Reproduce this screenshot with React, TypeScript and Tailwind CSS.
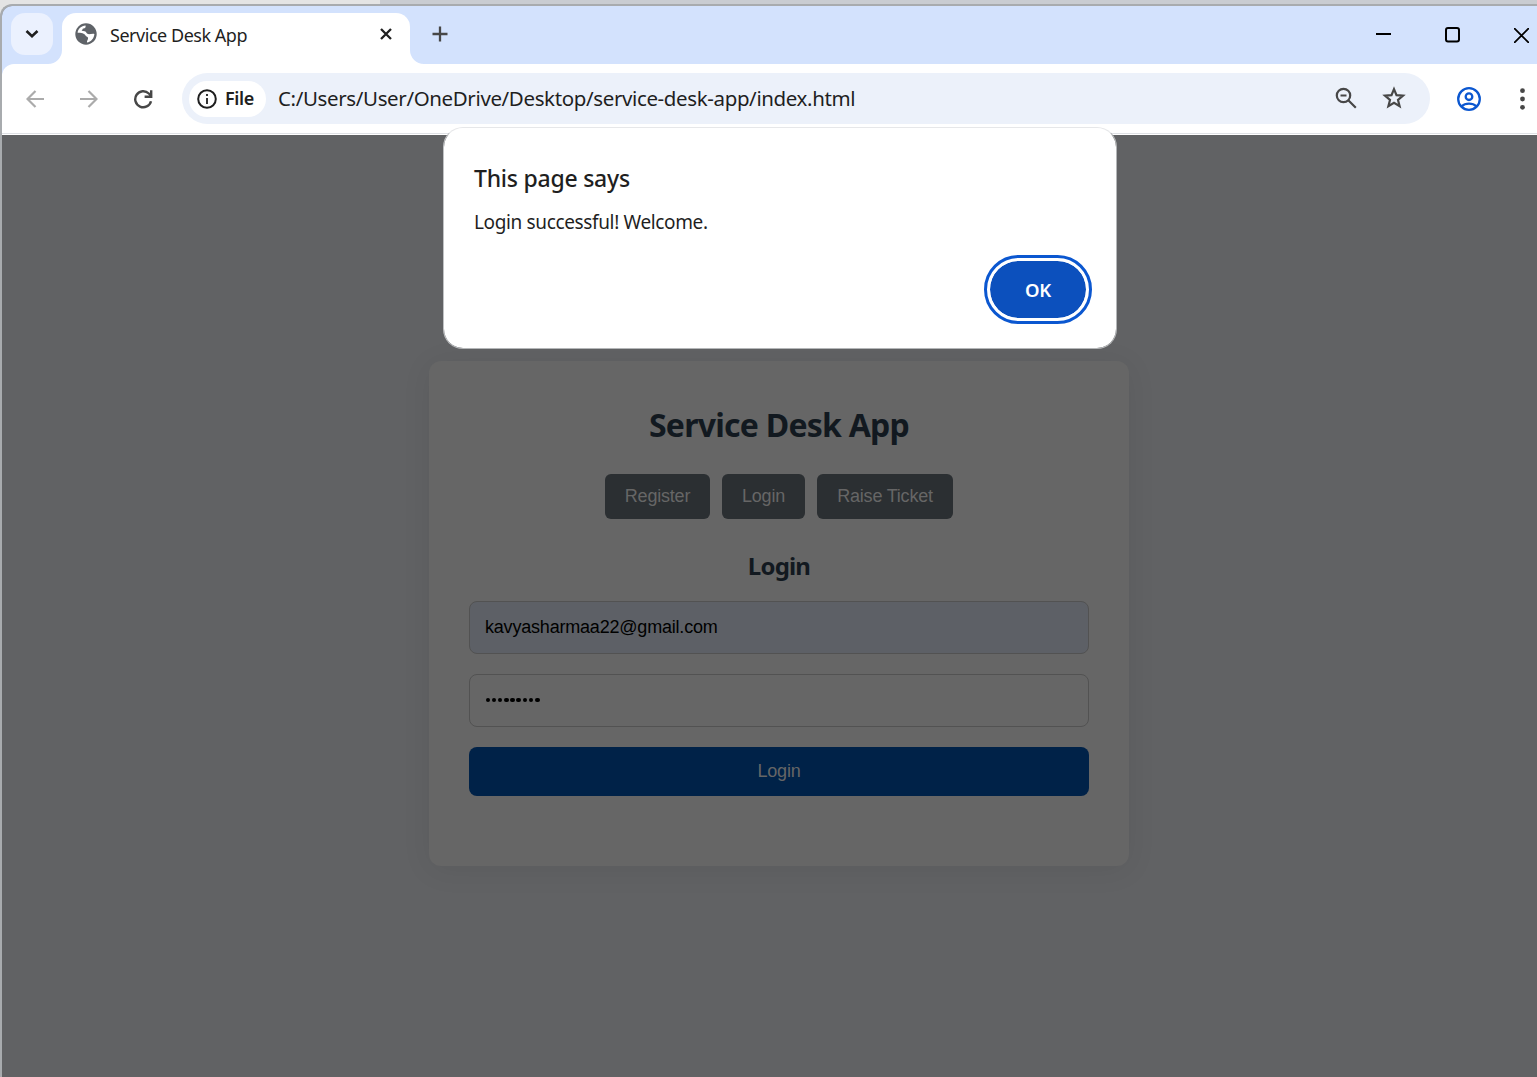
import React from 'react';

const ui = "font-['Noto_Sans','Open_Sans',sans-serif]";

function GlobeIcon() {
  return (
    <svg width="22" height="22" viewBox="0 0 22 22" className="shrink-0">
      <circle cx="11" cy="11" r="10.7" fill="#5f6368" />
      <path d="M2.600 9.800C3 5.800 6.200 2.900 10.600 2.500c.3 1.900-.5 2.800-2.200 3-1.200.2-.7 1.700-1.900 2.300 1 .4 2.100.2 3.200.4 1.900.4 1.600 2.600 3.300 2.900 2 .3 4-.6 6.400-.2-.3 4.200-3.300 7.900-7.400 8.500-.3-1.700.9-2.500 1.100-4 .1-1.700-2-1.200-2.600-2.800C9.700 10.200 6 10 2.600 9.800z" fill="#fff" />
    </svg>
  );
}

function TabStrip() {
  return (
    <div className="flex h-[58px] bg-[#d3e2fd]">
      <div className="w-[60px] shrink-0 pt-[7px] pl-[9px]">
        <button className="flex h-[42px] w-[42px] items-center justify-center rounded-[14px] bg-[#ebf1fe]">
          <svg width="14" height="10" viewBox="0 0 14 10" fill="none" stroke="#1f1f1f" strokeWidth="2.6"><path d="M1.500 2l5.500 5.200L12.500 2" /></svg>
        </button>
      </div>
      <div className="relative mt-[7px] flex h-[51px] w-[348px] shrink-0 items-start rounded-t-[14px] bg-white">
        <svg className="absolute bottom-0 -left-[14px]" width="14" height="14"><path d="M14 0v14H0A14 14 0 0 0 14 0z" fill="#fff" /></svg>
        <svg className="absolute -right-[14px] bottom-0" width="14" height="14"><path d="M0 0v14h14A14 14 0 0 1 0 0z" fill="#fff" /></svg>
        <div className="mt-[10px] ml-[13px]"><GlobeIcon /></div>
        <span className="mt-[10px] ml-[13px] w-[260px] text-[18px] leading-6 tracking-[-0.47px] whitespace-nowrap text-[#1f1f1f]">Service Desk App</span>
        <svg className="mt-[15px] ml-[10px] shrink-0" width="12" height="12" viewBox="0 0 12 12" stroke="#1f1f1f" strokeWidth="2.300"><path d="M1 1l10 10M11 1L1 11" /></svg>
      </div>
      <svg className="mt-[20px] ml-[22px] shrink-0" width="16" height="16" viewBox="0 0 16 16" stroke="#474747" strokeWidth="2.300"><path d="M8 .5v15M.5 8h15" /></svg>
      <svg className="mt-[27px] ml-auto shrink-0" width="15" height="2"><path d="M0 1h15" stroke="#000" strokeWidth="2" /></svg>
      <svg className="mt-[21px] ml-[54px] shrink-0" width="15" height="16" viewBox="0 0 15 16" fill="none"><rect x="1" y="1" width="13" height="13.500" rx="2" stroke="#000" strokeWidth="2" /></svg>
      <svg className="mt-[22px] mr-[8px] ml-[54px] shrink-0" width="15" height="15" viewBox="0 0 15 15" stroke="#000" strokeWidth="1.800"><path d="M0 0l15 15M15 0L0 15" /></svg>
    </div>
  );
}

function Toolbar() {
  return (
    <div className="bg-[#d3e2fd]">
      <div className="flex h-[71px] items-center rounded-tl-[12px] border-b border-white bg-white pb-px pl-[24px] shadow-[inset_0_-1px_0_#dfe1e5]">
        <svg width="18" height="18" viewBox="0 0 18 18" fill="none" stroke="#ababab" strokeWidth="2.200"><path d="M9.500 1L1.500 9l8 8M1.500 9H18" /></svg>
        <svg className="ml-[36px]" width="18" height="18" viewBox="0 0 18 18" fill="none" stroke="#ababab" strokeWidth="2.200"><path d="M8.500 1l8 8-8 8M16.500 9H0" /></svg>
        <svg className="ml-[35px]" width="20" height="20" viewBox="0 0 20 20" fill="none" stroke="#474747" strokeWidth="2.400"><path d="M18 12.200A8 8 0 1 1 15.800 4.500l2.200 2.200M18.200 1.200v6.600h-6.600" /></svg>
        <div className="ml-[29px] flex h-[51px] w-[1248px] shrink-0 items-center rounded-full bg-[#ecf1fa] pl-[7px]">
          <div className="flex h-[36px] w-[77px] items-center rounded-full bg-white pl-[8px]">
            <svg width="20" height="20" viewBox="0 0 20 20" fill="none" stroke="#1f1f1f" strokeWidth="2"><circle cx="10" cy="10" r="8.800" /><path d="M10 9v6M10 5v2" strokeWidth="1.800" /></svg>
            <span className="ml-[8px] text-[18px] font-semibold tracking-[-0.4px] text-[#1f1f1f]">File</span>
          </div>
          <span className="ml-[12px] w-[1057px] text-[20.500px] tracking-[-0.37px] whitespace-nowrap text-[#1f1f1f]">C:/Users/User/OneDrive/Desktop/service-desk-app/index.html</span>
          <svg className="-mt-px shrink-0" width="22" height="22" viewBox="0 0 22 22" fill="none" stroke="#474747" strokeWidth="2.200"><circle cx="8.500" cy="8.500" r="6.700" /><path d="M13.300 13.300l7.500 7.500M5.500 8.500h6" /></svg>
          <svg className="-mt-px ml-[25px] shrink-0" width="24" height="24" viewBox="0 0 24 24" fill="none" stroke="#474747" strokeWidth="2.200"><path d="M12 3.200l2.500 6 6.500.500-5 4.200 1.600 6.300L12 16.800l-5.600 3.400L8 13.900 3 9.700l6.500-.5z" /></svg>
        </div>
        <svg className="ml-[27px] shrink-0" width="24" height="24" viewBox="0 0 24 24" fill="none" stroke="#0b57d0" strokeWidth="2.300"><circle cx="12" cy="12" r="10.800" /><circle cx="12" cy="9.700" r="3.300" /><path d="M4.500 19.300c4-3.700 11-3.700 15 0" /></svg>
        <svg className="ml-[39px] shrink-0" width="5" height="22" viewBox="0 0 5 22" fill="#474747"><circle cx="2.500" cy="2.700" r="2.400" /><circle cx="2.500" cy="11" r="2.400" /><circle cx="2.500" cy="19.300" r="2.400" /></svg>
      </div>
    </div>
  );
}

function AlertDialog() {
  return (
    <div className="absolute top-[127px] left-[443px] h-[222px] w-[674px] rounded-[20px] border border-[#e6e7e9] border-r-[#b4b6b8] border-b-[#b4b6b8] border-l-[#c0c2c4] bg-white bg-clip-padding pt-[35px] pr-[27px] pl-[30px]">
      <h2 className="text-[23px] leading-[30px] font-medium tracking-[-0.24px] whitespace-nowrap text-[#1f1f1f]">This page says</h2>
      <p className="mt-[16px] text-[19px] leading-[26px] tracking-[-0.36px] whitespace-nowrap text-[#1f1f1f]">Login successful! Welcome.</p>
      <div className="mt-[23px] flex justify-end">
        <button className="flex h-[63px] w-[102px] items-center justify-center rounded-full border-[3px] border-white bg-[#0c50bd] bg-clip-padding text-[18.500px] font-semibold tracking-[-0.2px] text-white outline-[3px] outline-[#0b57d0]">OK</button>
      </div>
    </div>
  );
}

const tabs = [
  { label: 'Register', width: 'w-[105px]' },
  { label: 'Login', width: 'w-[83px]' },
  { label: 'Raise Ticket', width: 'w-[136px]' },
];

function LoginCard() {
  return (
    <main className="mt-[226px] ml-[427px] flex h-[505px] w-[700px] flex-col items-center rounded-[12px] bg-[#666] px-[40px] pt-[44px] shadow-[0_4px_30px_rgba(0,0,0,0.07)]">
      <h1 className="text-[32px] leading-[40px] font-bold tracking-[-0.76px] whitespace-nowrap text-[#121920]">Service Desk App</h1>
      <nav className="mt-[29px] flex gap-[12px] font-['Liberation_Sans',sans-serif]">
        {tabs.map((t) => (
          <button key={t.label} className={`${t.width} h-[45px] rounded-[6px] bg-[#2b2f32] text-[18px] tracking-[-0.2px] whitespace-nowrap text-[#666]`}>{t.label}</button>
        ))}
      </nav>
      <h2 className="mt-[31px] text-[24px] leading-[32px] font-bold tracking-[-0.8px] text-[#121920]">Login</h2>
      <div className="mt-[19px] flex h-[53px] w-full items-center rounded-[8px] border border-[#525252] bg-[#5d6066] px-[15px] font-['Liberation_Sans',sans-serif] text-[18px] tracking-[-0.2px] text-black">kavyasharmaa22@gmail.com</div>
      <div className="mt-[20px] flex h-[53px] w-full items-center gap-[1.700px] rounded-[8px] border border-[#525252] px-[15.500px] pb-px">
        {Array.from({ length: 9 }, (_, i) => <span key={i} className="h-[4.500px] w-[4.500px] rounded-full bg-black" />)}
      </div>
      <button className="mt-[20px] h-[49px] w-full rounded-[8px] bg-[#002248] font-['Liberation_Sans',sans-serif] text-[18px] tracking-[-0.2px] text-[#666]">Login</button>
    </main>
  );
}

export default function App() {
  return (
    <div className={`${ui} relative h-[1077px] w-full overflow-hidden bg-[#c9ccd1] bg-[linear-gradient(90deg,#e4e4e4_380px,#c9ccd1_380px)] pt-[4px]`}>
      <div className="flex h-[1073px] flex-col overflow-hidden rounded-tl-[12px] border-t-2 border-l-2 border-[#a8abae] bg-[#616264]">
        <TabStrip />
        <Toolbar />
        <LoginCard />
      </div>
      <AlertDialog />
    </div>
  );
}
